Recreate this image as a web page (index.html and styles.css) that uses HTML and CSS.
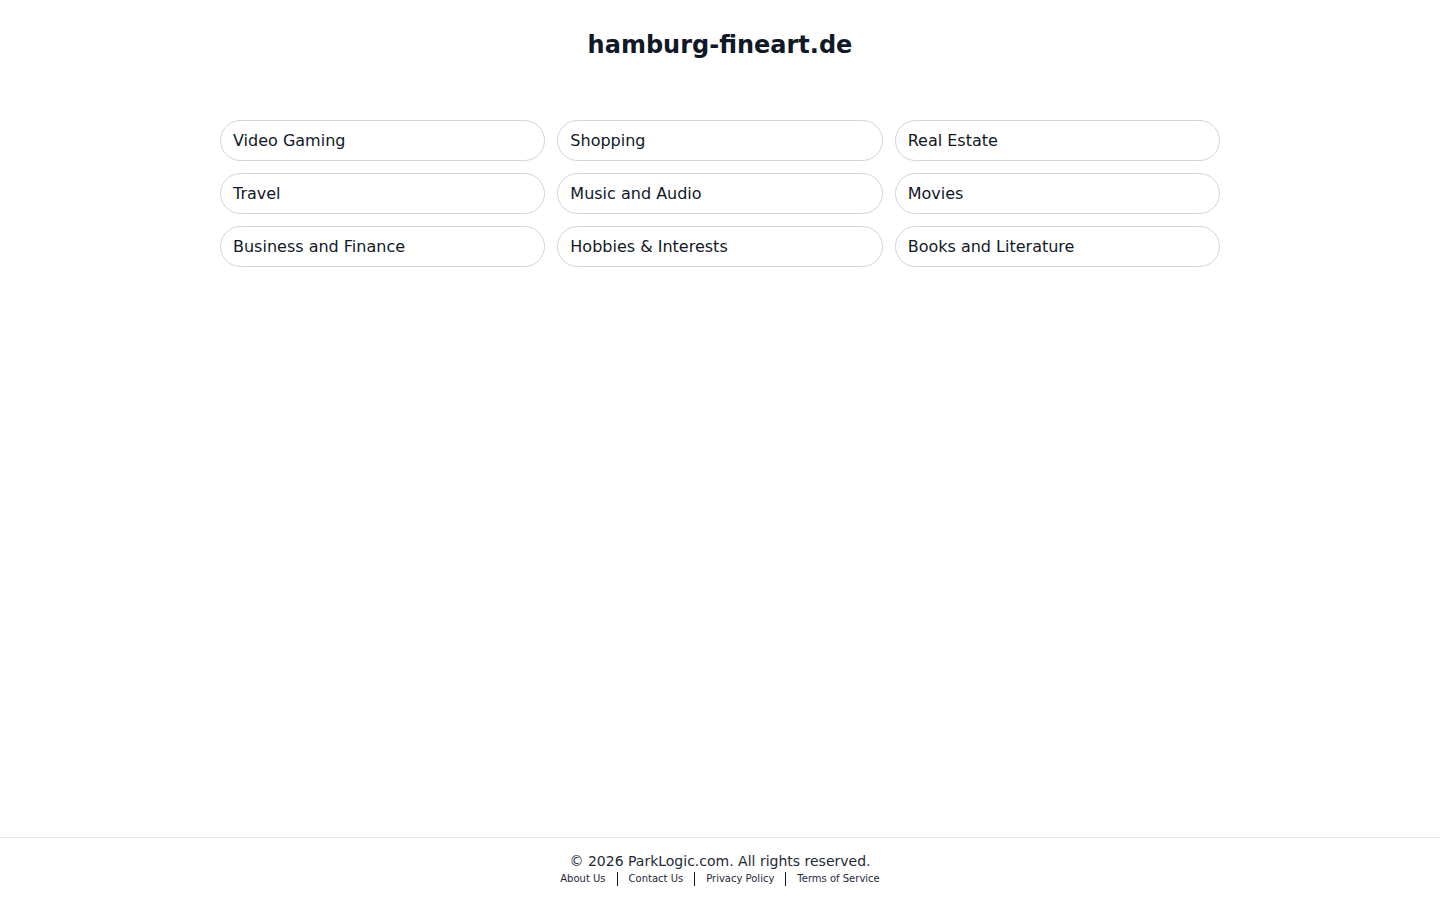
FILE: index.html
```html
<!DOCTYPE html>
<html lang="en">
<head>
<meta charset="utf-8">
<title>hamburg-fineart.de</title>
<link rel="stylesheet" href="styles.css">
</head>
<body>
<div class="page">
  <header class="header">
    <h1 class="title">hamburg-fineart.de</h1>
  </header>
  <main class="main">
    <div class="grid">
      <a class="pill" href="#">Video Gaming</a>
      <a class="pill" href="#">Shopping</a>
      <a class="pill" href="#">Real Estate</a>
      <a class="pill" href="#">Travel</a>
      <a class="pill" href="#">Music and Audio</a>
      <a class="pill" href="#">Movies</a>
      <a class="pill" href="#">Business and Finance</a>
      <a class="pill" href="#">Hobbies &amp; Interests</a>
      <a class="pill" href="#">Books and Literature</a>
    </div>
  </main>
  <footer class="footer">
    <div class="copy">© 2026 ParkLogic.com. All rights reserved.</div>
    <nav class="links">
      <a class="link" href="#">About Us</a>
      <span class="sep"></span>
      <a class="link" href="#">Contact Us</a>
      <span class="sep"></span>
      <a class="link" href="#">Privacy Policy</a>
      <span class="sep"></span>
      <a class="link" href="#">Terms of Service</a>
    </nav>
  </footer>
</div>
</body>
</html>
```

FILE: styles.css
```css
* { box-sizing: border-box; }
html, body { margin: 0; padding: 0; }
body {
  font-family: "DejaVu Sans", sans-serif;
  color: #111827;
  background: #ffffff;
}
.page {
  min-height: 900px;
  display: flex;
  flex-direction: column;
}
.header {
  padding-top: 29px;
  display: flex;
  justify-content: center;
}
.title {
  margin: 0;
  font-size: 24px;
  line-height: 32px;
  font-weight: 700;
  color: #111827;
}
.main {
  flex: 1;
  padding-top: 59px;
  display: flex;
  justify-content: center;
}
.grid {
  width: 1000px;
  display: grid;
  grid-template-columns: repeat(3, 1fr);
  column-gap: 12px;
  row-gap: 12px;
  align-content: start;
}
.pill {
  display: flex;
  align-items: center;
  height: 41px;
  padding: 0 12px;
  border: 1px solid #d4d4d8;
  border-radius: 9999px;
  font-size: 16px;
  color: #111827;
  text-decoration: none;
}
.footer {
  border-top: 1px solid #e5e7eb;
  padding: 13px 0 13px;
  display: flex;
  flex-direction: column;
  align-items: center;
}
.copy {
  font-size: 14px;
  line-height: 20px;
  color: #1f2937;
}
.links {
  display: flex;
  align-items: center;
  height: 16px;
}
.link {
  font-size: 10px;
  line-height: 16px;
  color: #1f2937;
  text-decoration: none;
}
.sep {
  width: 1px;
  height: 14px;
  background: #111827;
  margin: 0 11px;
}
```
